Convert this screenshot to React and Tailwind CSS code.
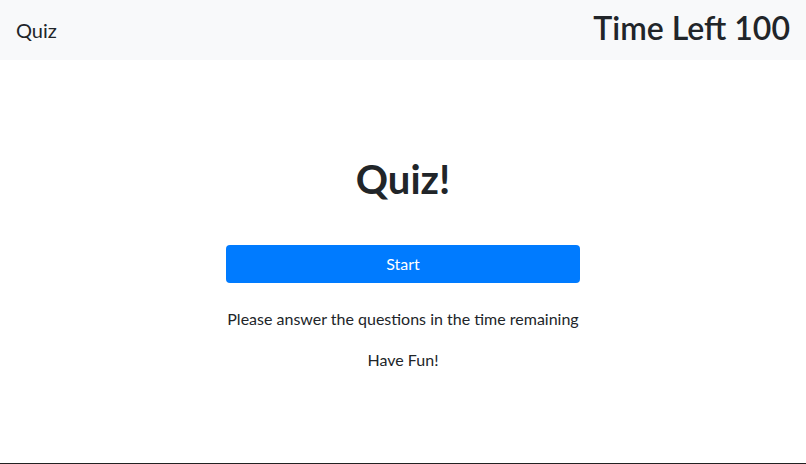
import React from 'react';

export default function App() {
  return (
    <div className="h-[464px] flex flex-col bg-white text-[#212529] font-['Segoe_UI','Lato',sans-serif]">
      <nav className="h-[60px] bg-[#f8f9fa] flex items-center justify-between px-4">
        <span className="text-[20px] leading-none mb-px">Quiz</span>
        <h2 className="text-[32px] font-semibold leading-none mb-1">Time Left 100</h2>
      </nav>
      <main className="flex-1 flex flex-col items-center">
        <h1 className="mt-[94px] text-[40px] font-bold leading-tight">Quiz!</h1>
        <button className="mt-[41px] w-[354px] h-[38px] rounded bg-[#007bff] text-white text-base">
          Start
        </button>
        <p className="mt-[24px] text-base">Please answer the questions in the time remaining</p>
        <p className="mt-[17px] text-base">Have Fun!</p>
      </main>
      <div className="h-px bg-[#222]" />
    </div>
  );
}
